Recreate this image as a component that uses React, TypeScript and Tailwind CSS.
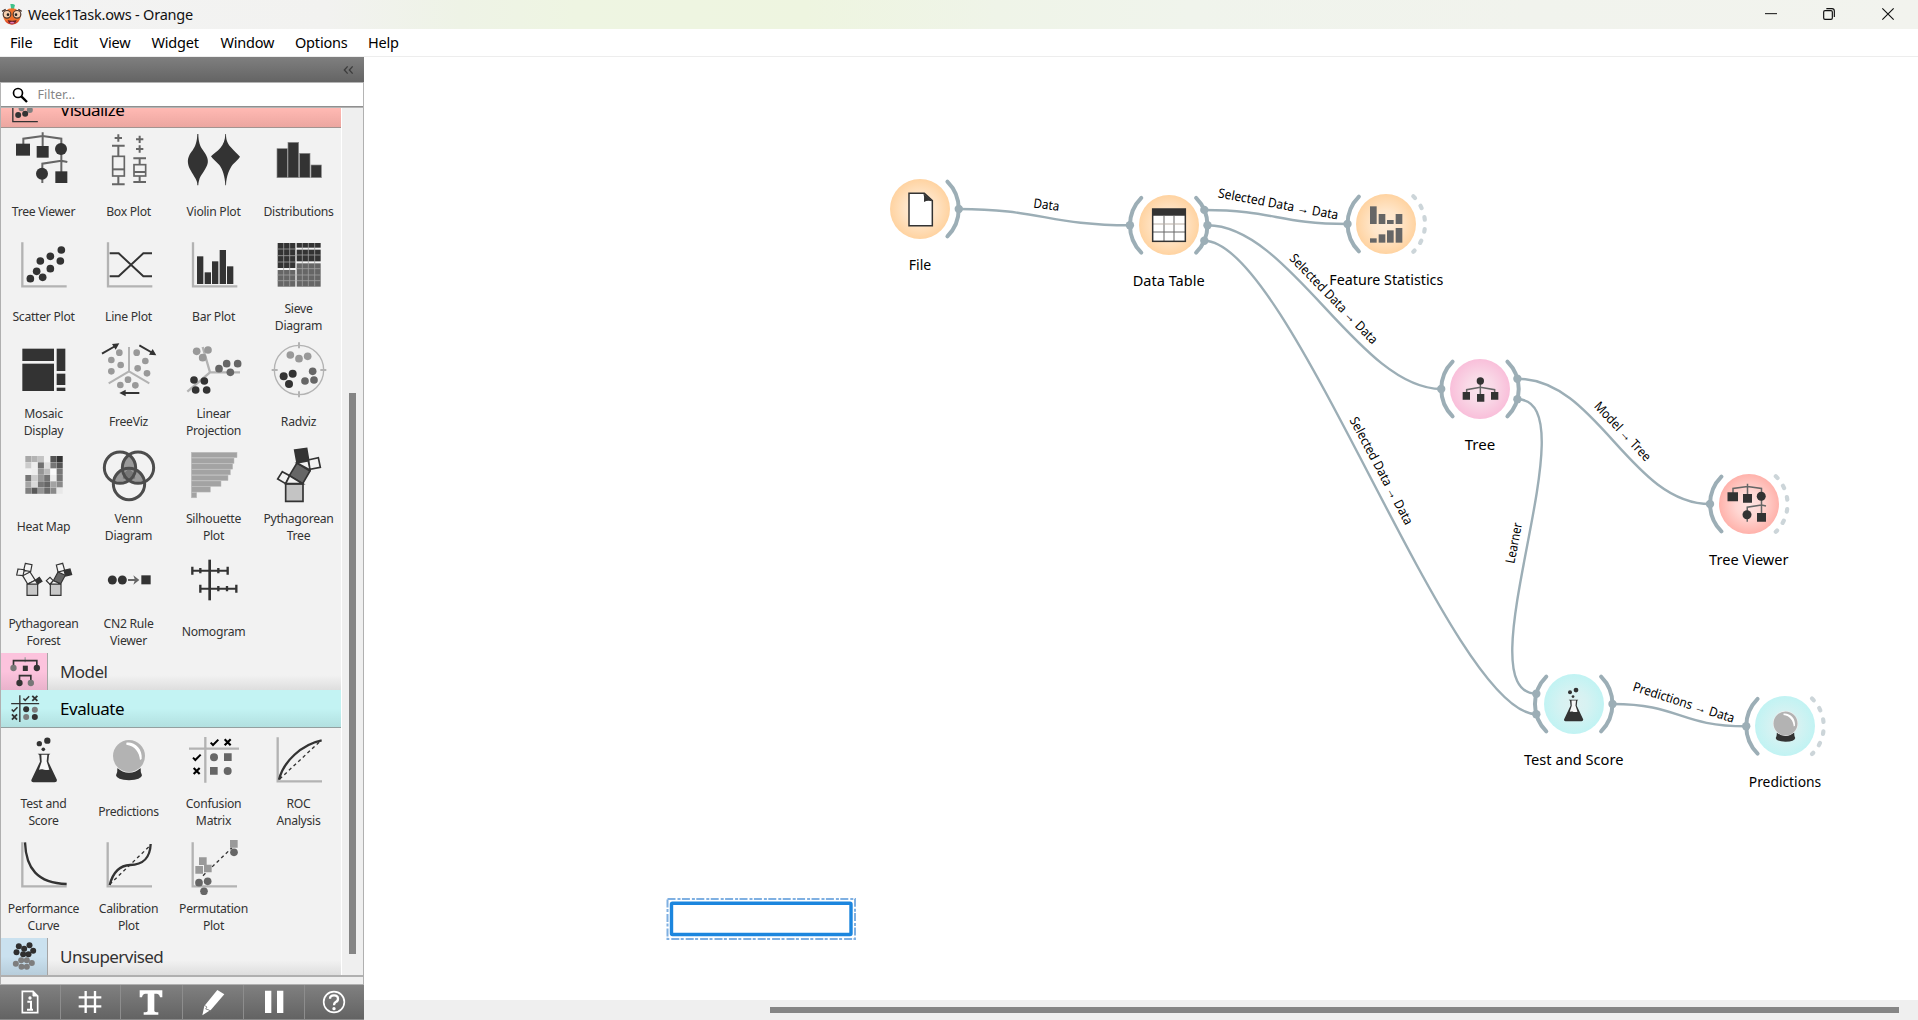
import React from "react";

const DARK = "#333333";
const MID = "#666666";
const SOFT = "#999999";
const AXIS = "#b3b3b3";
const LINK = "#9caeb6";

type Dot = [number, number];

function Dots({ points, r, fill }: { points: Dot[]; r: number; fill: string }) {
  return (
    <g fill={fill}>
      {points.map(([x, y]) => (
        <circle key={`${x}-${y}`} cx={x} cy={y} r={r} />
      ))}
    </g>
  );
}

function Axes({ x, y }: { x: number; y: number }) {
  return <path d={`M${x} ${y}v132h133`} fill="none" stroke={AXIS} strokeWidth="7" />;
}

function Check({ x, y, s = 1, color = "#000" }: { x: number; y: number; s?: number; color?: string }) {
  return (
    <path
      transform={`translate(${x} ${y}) scale(${s})`}
      d="M-11 1L-4 8L12 -8"
      fill="none"
      stroke={color}
      strokeWidth="6"
    />
  );
}

function Cross({ x, y, s = 1, color = "#000" }: { x: number; y: number; s?: number; color?: string }) {
  return (
    <path
      transform={`translate(${x} ${y}) scale(${s})`}
      d="M-9 -9L9 9M9 -9L-9 9"
      fill="none"
      stroke={color}
      strokeWidth="6.5"
    />
  );
}

const HEAT = [
  ["#a8a8a8", "#b3b3b3", "#c3c3c3", "#f2f2f2", "#555555", "#333333"],
  ["#cccccc", "#ededed", "#707070", "#dddddd", "#777777", "#555555"],
  ["#f2f2f2", "#ededed", "#959595", "#bbbbbb", "#fafafa", "#777777"],
  ["#777777", "#cccccc", "#999999", "#747474", "#ededed", "#777777"],
  ["#a5a5a5", "#d9d9d9", "#777777", "#666666", "#a3a3a3", "#8a8a8a"],
  ["#808080", "#595959", "#959595", "#6b6b6b", "#8a8a8a", "#e8e8e8"],
];

const SILHOUETTE = [137, 128, 124, 117, 110, 89, 57, 16];

type IconDef = { box: string; art: React.ReactNode };

const ICONS: Record<string, IconDef> = {
  treeViewer: {
    box: "42 390 180 180",
    art: (
      <>
        <path
          d="M70 436V416L128 408L184 416V440M128 397V440M184 460V520M127 510V491L184 482M184 482L202 486M127 530V549"
          fill="none"
          stroke={MID}
          strokeWidth="6"
        />
        <g fill={DARK}>
          <rect x="48" y="431" width="42" height="36" />
          <rect x="110" y="438" width="36" height="35" />
          <circle cx="183" cy="447" r="18" />
          <circle cx="126" cy="521" r="18" />
          <rect x="166" y="514" width="36" height="35" />
        </g>
      </>
    ),
  },
  boxPlot: {
    box: "297 390 180 180",
    art: (
      <g fill="none" stroke={MID} strokeWidth="5">
        <path d="M355 403v22M344 414h22" strokeWidth="6" />
        <path d="M419 407v22M408 418h22M419 436v22M408 447h22" strokeWidth="6" />
        <path d="M336 437h38M355 437v31M355 529v23M336 553h38" strokeWidth="6" />
        <rect x="338" y="469" width="35" height="59" />
        <path d="M338 508h35" strokeWidth="6" />
        <path d="M400 475h38M419 475v18M419 528v18M400 546h38" strokeWidth="6" />
        <rect x="402" y="494" width="35" height="34" />
        <path d="M402 516h35" strokeWidth="6" />
      </g>
    ),
  },
  violinPlot: {
    box: "552 390 180 180",
    art: (
      <g fill={DARK}>
        <path d="M592 402H595C595 425 600 440 610 452C622 468 625 480 623 490C620 505 605 522 599 535C596 545 595 550 595 556H592C592 548 590 542 586 535C578 520 566 506 564 490C562 474 568 464 578 451C587 437 591 425 592 402Z" />
        <path d="M676 402H678C678 420 682 430 692 441C702 453 712 461 720 470C716 477 708 483 699 493C688 507 679 528 678 556H676C675 530 668 508 658 495C648 484 638 477 633 469C640 461 652 455 661 444C671 432 675 420 676 402Z" />
      </g>
    ),
  },
  distributions: {
    box: "807 390 180 180",
    art: (
      <g fill={DARK} stroke="#8a8a8a" strokeWidth="2">
        <rect x="831" y="446" width="31" height="87" />
        <rect x="864" y="427" width="32" height="106" />
        <rect x="899" y="460" width="31" height="73" />
        <rect x="933" y="495" width="31" height="38" />
      </g>
    ),
  },
  scatterPlot: {
    box: "42 30 180 180",
    art: (
      <>
        <Axes x={67} y={52} />
        <Dots
          r={11.5}
          fill={DARK}
          points={[[184, 75], [151, 94], [121, 108], [181, 108], [151, 131], [110, 139], [91, 161], [128, 157]]}
        />
      </>
    ),
  },
  linePlot: {
    box: "297 30 180 180",
    art: (
      <>
        <Axes x={324} y={52} />
        <path d="M329 85H356L430 154H456M329 154H356L430 85H456" fill="none" stroke={DARK} strokeWidth="6" />
      </>
    ),
  },
  barPlot: {
    box: "552 30 180 180",
    art: (
      <>
        <Axes x={579} y={52} />
        <g fill={DARK}>
          <rect x="591" y="94" width="19" height="83" />
          <rect x="614" y="142" width="19" height="35" />
          <rect x="636" y="109" width="19" height="68" />
          <rect x="659" y="75" width="19" height="102" />
          <rect x="681" y="124" width="19" height="53" />
        </g>
      </>
    ),
  },
  sieve: {
    box: "807 30 180 180",
    art: (
      <>
        <rect x="833" y="54" width="53" height="75" fill={DARK} />
        <rect x="890" y="54" width="72" height="14" fill={DARK} />
        <rect x="890" y="74" width="72" height="35" fill={DARK} />
        <rect x="833" y="135" width="53" height="50" fill={MID} />
        <rect x="890" y="115" width="72" height="70" fill={MID} />
        <path
          d="M851 54v131M869 54v131M907 54v131M925 54v131M944 54v131M833 72h53M833 92h53M833 111h53M833 150h53M833 167h53M890 90h72M890 131h72M890 150h72M890 167h72"
          fill="none"
          stroke="#a0a0a0"
          strokeWidth="2.4"
        />
      </>
    ),
  },
  mosaic: {
    box: "42 345 180 180",
    art: (
      <g fill={DARK}>
        <rect x="67" y="371" width="95" height="37" />
        <rect x="67" y="416" width="95" height="82" />
        <rect x="170" y="371" width="26" height="67" />
        <rect x="170" y="446" width="26" height="34" />
        <rect x="170" y="488" width="26" height="10" />
      </g>
    ),
  },
  freeViz: {
    box: "297 345 180 180",
    art: (
      <>
        <path d="M387 366V439L326 475M387 439L448 475" fill="none" stroke={AXIS} strokeWidth="6" />
        <Dots
          r={10}
          fill={SOFT}
          points={[[358, 383], [410, 383], [334, 405], [436, 408], [362, 420], [413, 430], [334, 439], [441, 445], [384, 464], [361, 480], [406, 481]]}
        />
        <g fill={DARK} stroke={DARK}>
          <path d="M306 386L346 363M418 361L458 384M418 504H372" strokeWidth="6" />
          <path d="M358 355L336 357L347 374ZM469 391L447 389L458 372ZM358 504L377 494V514Z" stroke="none" />
        </g>
      </>
    ),
  },
  linearProjection: {
    box: "552 345 180 180",
    art: (
      <>
        <path d="M608 366L630 442H720M630 442L562 500" fill="none" stroke={AXIS} strokeWidth="7" />
        <Dots r={11.5} fill={SOFT} points={[[590, 379], [624, 375], [608, 398]]} />
        <Dots r={11.5} fill={MID} points={[[657, 431], [680, 416], [713, 416], [691, 442]]} />
        <Dots r={11.5} fill={DARK} points={[[582, 465], [613, 468], [587, 495], [620, 495]]} />
      </>
    ),
  },
  radviz: {
    box: "807 345 180 180",
    art: (
      <>
        <circle cx="897" cy="435" r="74" fill="none" stroke={AXIS} strokeWidth="4" />
        <path d="M897 352v18M897 499v18M815 435h18M961 435h18" stroke={AXIS} strokeWidth="6" />
        <Dots r={11.5} fill={SOFT} points={[[871, 390], [897, 401], [923, 394]]} />
        <Dots r={11.5} fill={MID} points={[[938, 439], [915, 468], [942, 465]]} />
        <Dots r={12} fill={DARK} points={[[878, 446], [851, 454], [867, 477]]} />
      </>
    ),
  },
  heatMap: {
    box: "42 30 180 180",
    art: (
      <>
        {HEAT.map((row, j) =>
          row.map((c, i) => (
            <rect key={`${i}-${j}`} x={76 + i * 18.8} y={63 + j * 19} width="18.2" height="18.4" fill={c} />
          )),
        )}
      </>
    ),
  },
  venn: {
    box: "297 30 180 180",
    art: (
      <>
        <clipPath id="vennLeft">
          <circle cx="360" cy="98" r="46" />
        </clipPath>
        <clipPath id="vennRight">
          <circle cx="414" cy="98" r="46" />
        </clipPath>
        <circle cx="414" cy="98" r="46" fill="#999" clipPath="url(#vennLeft)" />
        <circle cx="387" cy="147" r="46" fill="#999" clipPath="url(#vennLeft)" />
        <circle cx="387" cy="147" r="46" fill="#999" clipPath="url(#vennRight)" />
        <path d="M387 101C398 108 404 117 406 130C394 136 380 136 368 130C370 117 376 108 387 101Z" fill="#777" />
        <g fill="none" stroke="#4d4d4d" strokeWidth="9">
          <circle cx="360" cy="98" r="47" />
          <circle cx="414" cy="98" r="47" />
          <circle cx="387" cy="147" r="47" />
        </g>
      </>
    ),
  },
  silhouette: {
    box: "552 30 180 180",
    art: (
      <g fill="#a3a3a3">
        {SILHOUETTE.map((w, i) => (
          <rect key={i} x="574" y={52 + i * 17.2} width={w} height="16" stroke="#bcbcbc" strokeWidth="1.5" />
        ))}
      </g>
    ),
  },
  pythTree: {
    box: "807 30 180 180",
    art: (
      <g stroke={DARK} strokeWidth="5">
        <path d="M857 147H909V199H857Z" fill="#c4c4c4" />
        <path d="M891 84L930 108L908 146L868 122Z" fill={MID} />
        <path d="M884 45L920 40L926 76L891 83Z" fill={DARK} />
        <path d="M924 75L955 68L961 97L930 103ZM847 110L869 122L857 146L833 132ZM891 84L926 77L930 105Z" fill="#f2f2f2" />
        <path d="M869 122L857 146L908 146Z" fill="#f2f2f2" />
      </g>
    ),
  },
  pythForest: {
    box: "42 345 180 180",
    art: (
      <g stroke={DARK} strokeWidth="3.5" fill="#f4f4f4">
        <path d="M81 447H113V481H81ZM151 447H183V481H151Z" fill="#c8c8c8" />
        <path d="M68 422L90 411L106 436L83 447Z" />
        <path d="M54 402L73 404L69 422L50 420ZM76 385L96 389L92 410L71 406Z" />
        <path d="M106 436L118 427L126 439L113 447Z" fill={DARK} />
        <path d="M174 411L196 421L182 446L160 437Z" fill={MID} />
        <path d="M169 390L188 385L194 406L174 411ZM139 437L150 427L160 437L150 448Z" />
        <path d="M192 406L210 402L215 419L197 423Z" fill={DARK} />
        <path d="M83 447L106 436L113 447ZM151 447L160 437L183 447Z" />
      </g>
    ),
  },
  cn2: {
    box: "297 345 180 180",
    art: (
      <>
        <Dots r={13.5} fill={DARK} points={[[337, 435], [367, 435]]} />
        <path d="M384 435H408" stroke={MID} strokeWidth="6" />
        <path d="M400 421L418 435L400 449L405 435Z" fill={MID} />
        <rect x="424" y="421" width="28" height="27" fill={DARK} />
      </>
    ),
  },
  nomogram: {
    box: "552 345 180 180",
    art: (
      <g stroke={DARK} fill="none">
        <path d="M629 374V496" strokeWidth="8" />
        <path d="M576 407H683M601 461H709" strokeWidth="6" />
        <path
          d="M577 395v24M601 399v16M655 399v16M683 395v24M601 449v24M655 453v16M681 453v16M709 449v24"
          strokeWidth="7"
        />
      </g>
    ),
  },
  flask: {
    box: "42 255 180 180",
    art: (
      <>
        <Dots r={9.5} fill={DARK} points={[[142, 287]]} />
        <Dots r={8} fill={DARK} points={[[118, 296]]} />
        <Dots r={5.5} fill={DARK} points={[[130, 313]]} />
        <path d="M113 326H151L147 330L145 350L171 405Q171 412 164 412H100Q93 412 94 405L120 350L118 330Z" fill={DARK} />
        <path d="M124 329H142L140 349L148 374Q134 377 128 373Q121 372 117 374L125 350Z" fill="#f6f6f6" />
      </>
    ),
  },
  ball: {
    box: "297 255 180 180",
    art: (
      <>
        <path d="M352 370H422Q421 384 426 391Q424 405 387 406Q350 405 348 391Q353 384 352 370Z" fill={DARK} />
        <circle cx="387" cy="333" r="50" fill="#f2f2f2" />
        <circle cx="387" cy="333" r="48" fill="#b3b3b3" />
        <path d="M379 293C405 290 428 312 425 342L420 345C418 322 405 302 379 299Z" fill="#fff" />
      </>
    ),
  },
  confusion: {
    box: "552 255 180 180",
    art: (
      <>
        <path d="M616 276V413M567 311H717" stroke={AXIS} strokeWidth="7" />
        <Check x={643} y={292} />
        <Cross x={683} y={292} />
        <Check x={590} y={337} />
        <Cross x={590} y={378} />
        <Dots r={12} fill={MID} points={[[642, 337], [683, 378]]} />
        <path d="M672 325h23v23h-23ZM630 366h23v23h-23Z" fill={MID} />
      </>
    ),
  },
  roc: {
    box: "807 255 180 180",
    art: (
      <>
        <Axes x={833} y={277} />
        <path d="M839 402L958 291" stroke={DARK} strokeWidth="4" strokeDasharray="10 9" />
        <path d="M837 404C850 350 905 298 965 286" fill="none" stroke={DARK} strokeWidth="7" />
      </>
    ),
  },
  perfCurve: {
    box: "42 30 180 180",
    art: (
      <>
        <Axes x={67} y={52} />
        <path d="M75 52C78 130 112 175 200 177" fill="none" stroke={DARK} strokeWidth="7" />
      </>
    ),
  },
  calibration: {
    box: "297 30 180 180",
    art: (
      <>
        <Axes x={323} y={52} />
        <path d="M329 178L446 66" stroke={DARK} strokeWidth="4" strokeDasharray="10 9" />
        <path d="M329 180C340 138 360 121 390 120C430 119 450 100 452 57" fill="none" stroke={DARK} strokeWidth="7" />
      </>
    ),
  },
  permutation: {
    box: "552 30 180 180",
    art: (
      <>
        <Axes x={578} y={52} />
        <path d="M609 152L696 68" stroke={DARK} strokeWidth="4" strokeDasharray="10 9" />
        <path d="M690 45h23v23h-23ZM597 97h23v23h-23ZM586 123h23v23h-23ZM612 119h23v23h-23Z" fill={SOFT} />
        <Dots r={11.5} fill={MID} points={[[702, 82], [623, 169], [597, 173], [612, 199]]} />
      </>
    ),
  },
  featureStats: {
    box: "499 132 120 120",
    art: (
      <g fill={MID}>
        <rect x="511" y="139" width="20" height="53" />
        <rect x="537" y="162" width="20" height="30" />
        <rect x="562" y="180" width="20" height="12" />
        <rect x="588" y="162" width="20" height="30" />
        <rect x="511" y="235" width="20" height="13" />
        <rect x="537" y="223" width="20" height="25" />
        <rect x="562" y="211" width="20" height="37" />
        <rect x="588" y="204" width="20" height="44" />
      </g>
    ),
  },
  table: {
    box: "836 136 120 120",
    art: (
      <>
        <rect x="847" y="148" width="98" height="96" fill="#fff" />
        <path d="M847 148h98v20h-98Z" fill={DARK} />
        <path d="M881 168v76M911 168v76M847 217h98" stroke={MID} strokeWidth="3" fill="none" />
        <path d="M847 193h98" stroke="#b9afa6" strokeWidth="3" />
        <rect x="847" y="148" width="98" height="97" fill="none" stroke={DARK} strokeWidth="4.5" />
      </>
    ),
  },
  file: {
    box: "90 87 120 120",
    art: (
      <>
        <path d="M117 100H163L187 122V197H117Z" fill="#fff" stroke={DARK} strokeWidth="4.5" />
        <path d="M160 100L187 124Q172 120 162 126Q164 112 160 100Z" fill={DARK} />
      </>
    ),
  },
  tree: {
    box: "390 87 120 120",
    art: (
      <>
        <path d="M451 122V165M410 160V149L451 142L494 149V160" fill="none" stroke={MID} strokeWidth="4.5" />
        <circle cx="451" cy="123" r="11" fill={DARK} />
        <path d="M398 156h22v23h-22ZM441 162h22v23h-22ZM483 156h22v23h-22Z" fill={DARK} />
      </>
    ),
  },
};

function Icon({ name, className }: { name: string; className: string }) {
  const icon = ICONS[name];
  return (
    <svg viewBox={icon.box} className={className}>
      {icon.art}
    </svg>
  );
}

type Widget = { icon: string; lines: string[] };

const VISUALIZE: Widget[] = [
  { icon: "treeViewer", lines: ["Tree Viewer"] },
  { icon: "boxPlot", lines: ["Box Plot"] },
  { icon: "violinPlot", lines: ["Violin Plot"] },
  { icon: "distributions", lines: ["Distributions"] },
  { icon: "scatterPlot", lines: ["Scatter Plot"] },
  { icon: "linePlot", lines: ["Line Plot"] },
  { icon: "barPlot", lines: ["Bar Plot"] },
  { icon: "sieve", lines: ["Sieve", "Diagram"] },
  { icon: "mosaic", lines: ["Mosaic", "Display"] },
  { icon: "freeViz", lines: ["FreeViz"] },
  { icon: "linearProjection", lines: ["Linear", "Projection"] },
  { icon: "radviz", lines: ["Radviz"] },
  { icon: "heatMap", lines: ["Heat Map"] },
  { icon: "venn", lines: ["Venn", "Diagram"] },
  { icon: "silhouette", lines: ["Silhouette", "Plot"] },
  { icon: "pythTree", lines: ["Pythagorean", "Tree"] },
  { icon: "pythForest", lines: ["Pythagorean", "Forest"] },
  { icon: "cn2", lines: ["CN2 Rule", "Viewer"] },
  { icon: "nomogram", lines: ["Nomogram"] },
];

const EVALUATE: Widget[] = [
  { icon: "flask", lines: ["Test and", "Score"] },
  { icon: "ball", lines: ["Predictions"] },
  { icon: "confusion", lines: ["Confusion", "Matrix"] },
  { icon: "roc", lines: ["ROC", "Analysis"] },
  { icon: "perfCurve", lines: ["Performance", "Curve"] },
  { icon: "calibration", lines: ["Calibration", "Plot"] },
  { icon: "permutation", lines: ["Permutation", "Plot"] },
];

function WidgetGrid({ items }: { items: Widget[] }) {
  return (
    <div className="grid grid-cols-[repeat(4,85px)]">
      {items.map((w) => (
        <div key={w.lines.join(" ")} className="flex h-[105px] flex-col items-center pt-0.5">
          <Icon name={w.icon} className="size-[60px] shrink-0" />
          <div className="flex h-11 flex-col items-center justify-center text-[12.2px] leading-[17px] tracking-[-0.28px] whitespace-nowrap text-[#333]">
            {w.lines.map((l) => (
              <span key={l}>{l}</span>
            ))}
          </div>
        </div>
      ))}
    </div>
  );
}

function VisualizeIcon() {
  return (
    <svg viewBox="3 270 140 111" className="h-[37px] w-[47px]">
      <path d="M38 290V365H113" fill="none" stroke={DARK} strokeWidth="4" />
      <Dots r={9} fill="#808080" points={[[64, 325], [89, 330], [80, 300]]} />
      <Dots r={9} fill={DARK} points={[[54, 345], [75, 341], [100, 310]]} />
    </svg>
  );
}

function ModelIcon() {
  return (
    <svg viewBox="3 24 140 111" className="h-[37px] w-[47px]">
      <path d="M75 37v15" stroke="#a0a0a0" strokeWidth="4" />
      <path d="M40 60V47H110V60M58 106V92H92V106" fill="none" stroke={DARK} strokeWidth="5" />
      <rect x="68" y="62" width="15" height="16" fill={DARK} />
      <Dots r={9.5} fill={DARK} points={[[110, 69], [58, 114]]} />
      <Dots r={9.5} fill="#777" points={[[40, 69], [92, 114]]} />
    </svg>
  );
}

function EvaluateIcon() {
  return (
    <svg viewBox="3 135 140 111" className="h-[37px] w-[47px]">
      <path d="M59 151V231M33 176H117" stroke={DARK} strokeWidth="4" />
      <Check x={78} y={160} s={0.75} color={DARK} />
      <Cross x={104} y={160} s={0.85} color={DARK} />
      <Check x={43} y={193} s={0.75} color={DARK} />
      <Cross x={43} y={216} s={0.85} color={DARK} />
      <Dots r={9} fill={DARK} points={[[78, 193], [104, 216]]} />
      <Dots r={9} fill="#7d7d7d" points={[[104, 194], [78, 216]]} />
    </svg>
  );
}

function UnsupervisedIcon() {
  return (
    <svg viewBox="3 339 140 111" className="h-[37px] w-[47px]">
      <Dots r={9} fill="#7d7d7d" points={[[63, 406], [80, 406], [47, 416], [95, 414], [64, 425], [80, 425]]} />
      <Dots r={9} fill="#2f2f2f" points={[[56, 364], [88, 361], [72, 371], [49, 382], [99, 377], [69, 388], [85, 388]]} />
    </svg>
  );
}

function OrangeLogo() {
  return (
    <svg viewBox="0 0 66 66" className="size-[22px] shrink-0">
      <path d="M28 0Q35 -2 42 3L38 18H31Z" fill="#3fc28b" />
      <ellipse cx="33" cy="37" rx="26" ry="24" fill="#f0702a" />
      <path d="M11 48Q33 66 55 48Q47 62 33 62Q19 62 11 48Z" fill="#d9402c" />
      <circle cx="18" cy="31" r="11.5" fill="#f6cfae" stroke="#4a352c" strokeWidth="3.5" />
      <circle cx="48" cy="31" r="11.5" fill="#f6cfae" stroke="#4a352c" strokeWidth="3.5" />
      <circle cx="21" cy="32" r="4" fill="#222" />
      <circle cx="45" cy="32" r="4" fill="#222" />
      <path d="M3 22L14 16M62 22L52 16" stroke="#4a352c" strokeWidth="4" />
      <path d="M20 48Q33 52 47 48Q44 60 33 60Q23 60 20 48Z" fill="#6a2027" />
      <path d="M26 56Q33 51 41 56Q33 61 26 56Z" fill="#e879b0" />
    </svg>
  );
}

function TitleBar() {
  return (
    <header className="flex h-[29px] shrink-0 items-center bg-[linear-gradient(90deg,#f3f3f3_0%,#f2f2f0_17%,#eef3e6_24%,#eef5e2_30%,#eef5e0_42%,#eff4e8_52%,#f0f4ec_62%,#f1f3ed_80%,#f2f3ee_100%)] pl-[1px]">
      <OrangeLogo />
      <h1 className="ml-[5px] text-[14.5px] tracking-[-0.2px] text-[#111]">Week1Task.ows - Orange</h1>
      <div className="ml-auto flex items-center">
        <svg viewBox="0 0 654 87" className="h-[29px] w-[218px]" fill="none" stroke="#111">
          <path d="M195 41H231" strokeWidth="3" />
          <rect x="371" y="32" width="26" height="26" rx="4" strokeWidth="3.5" />
          <path d="M379 26H396Q403 26 403 33V51" strokeWidth="3.5" />
          <path d="M547 25L581 59M581 25L547 59" strokeWidth="3.5" />
        </svg>
      </div>
    </header>
  );
}

function MenuBar() {
  return (
    <nav className="flex h-7 shrink-0 items-center border-b border-[#ededed] bg-white pl-[10px] text-[14.5px] tracking-[-0.2px] text-black">
      <span className="w-[43px]">File</span>
      <span className="w-[46.5px]">Edit</span>
      <span className="w-[52px]">View</span>
      <span className="w-[69px]">Widget</span>
      <span className="w-[74.5px]">Window</span>
      <span className="w-[73px]">Options</span>
      <span>Help</span>
    </nav>
  );
}

function Section({ icon, title, tab }: { icon: React.ReactNode; title: string; tab: string }) {
  return (
    <div className="flex h-[37px] items-center bg-[linear-gradient(#f2f2f2_60%,#dedede)]">
      <div className={`h-[37px] w-[47px] border-r border-[#a5a5a5] ${tab}`}>{icon}</div>
      <span className="ml-3 text-[17px] tracking-[-0.55px] text-[#333]">{title}</span>
    </div>
  );
}

function Toolbar() {
  const cell = "flex h-full items-center justify-center border-r border-[#8d8d8d] pr-px";
  return (
    <div className="grid h-[34px] shrink-0 grid-cols-[61px_60px_62px_61px_61px_59px] bg-[linear-gradient(#808080,#636363)]">
      <div className={cell}>
        <svg viewBox="60 486 60 90" className="h-[30px] w-5">
          <path d="M67 499H99L113 513V563H67Z" fill="none" stroke="#fff" strokeWidth="5" />
          <path d="M99 499V513H113" fill="#fff" stroke="#fff" strokeWidth="3" />
          <circle cx="90" cy="519" r="5" fill="#fff" />
          <path d="M82 530H93V552M81 554H99" fill="none" stroke="#fff" strokeWidth="6" />
        </svg>
      </div>
      <div className={cell}>
        <svg viewBox="225 486 90 90" className="size-[30px]">
          <path d="M257 498V564M285 498V564M236 517H304M236 544H304" stroke="#fff" strokeWidth="7" />
        </svg>
      </div>
      <div className={cell}>
        <svg viewBox="408 486 90 90" className="size-[30px]">
          <path d="M419 496H487V517H480Q478 506 470 506H463V557Q463 562 475 562V569H431V562Q443 562 443 557V506H436Q428 506 426 517H419Z" fill="#fff" />
        </svg>
      </div>
      <div className={cell}>
        <svg viewBox="593 486 90 90" className="size-[30px]">
          <path d="M651 495L672 508L632 554L606 571L612 543Z" fill="#fff" />
          <path d="M612 541L620 546L616 552L626 555L631 559" fill="none" stroke="#777" strokeWidth="2.5" />
        </svg>
      </div>
      <div className={cell}>
        <svg viewBox="777 486 90 90" className="size-[30px]">
          <path d="M795 497h19v67h-19ZM831 497h19v67h-19Z" fill="#fff" />
        </svg>
      </div>
      <div className="flex h-full items-center justify-center pr-0.5">
        <svg viewBox="957 486 90 90" className="size-[30px]">
          <circle cx="1002" cy="531" r="31" fill="none" stroke="#fff" strokeWidth="5" />
          <path d="M990 521Q990 511 1002 511Q1014 511 1014 521Q1014 528 1007 531Q1002 534 1002 541" fill="none" stroke="#fff" strokeWidth="7" />
          <circle cx="1002" cy="551" r="5" fill="#fff" />
        </svg>
      </div>
    </div>
  );
}

function Sidebar() {
  return (
    <aside className="flex w-[364px] shrink-0 flex-col bg-[#f2f2f2]">
      <div className="flex h-[25px] shrink-0 items-center justify-end bg-[linear-gradient(#7f7f7f,#646464)] pr-[10px]">
        <svg viewBox="1030 192 33 30" className="h-[10px] w-[11px]" fill="none" stroke="#3c3c3c" strokeWidth="4">
          <path d="M1044 196L1034 207L1044 218M1059 196L1049 207L1059 218" />
        </svg>
      </div>
      <div className="flex h-[26px] shrink-0 items-center border border-[#b4b4b4] bg-white shadow-[inset_0_-1px_0_#8f8f8f]">
        <svg viewBox="36 258 48 48" className="ml-[11px] size-4" fill="none" stroke="#000">
          <circle cx="54" cy="276" r="13.5" strokeWidth="5" />
          <path d="M64 286L81 303" strokeWidth="7" />
        </svg>
        <span className="ml-[9.5px] pt-px text-[12.5px] text-[#868686]">Filter...</span>
      </div>
      <div className="flex h-[867px] shrink-0 overflow-hidden border-x border-[#b0b0b0]">
        <div className="w-[340px] shrink-0 overflow-hidden">
          <div className="-mt-[18px] flex h-[38px] items-center border-b border-[#a39390] bg-[linear-gradient(#ffb9b3_50%,#eca6a0)]">
            <VisualizeIcon />
            <span className="ml-3 pt-0.5 text-[17px] tracking-[-0.55px] text-black">Visualize</span>
          </div>
          <WidgetGrid items={VISUALIZE} />
          <Section icon={<ModelIcon />} title="Model" tab="bg-[linear-gradient(#fcc3dd_50%,#e9b2cb)]" />
          <div className="flex h-[38px] items-center border-b border-[#93a0a0] bg-[linear-gradient(#c3f3f3_50%,#b2e0e0)]">
            <EvaluateIcon />
            <span className="ml-3 pt-px text-[17px] tracking-[-0.45px] text-black">Evaluate</span>
          </div>
          <WidgetGrid items={EVALUATE} />
          <Section icon={<UnsupervisedIcon />} title="Unsupervised" tab="bg-[linear-gradient(#cae1ef_50%,#b7cddb)]" />
        </div>
        <div className="flex flex-1 items-start border-l border-white bg-[#efefef] pt-[285px] pl-[7px]">
          <div className="h-[561px] w-[7px] bg-[#858585]" />
        </div>
      </div>
      <div className="h-[10px] shrink-0 border border-t-2 border-[#b0b0b0] bg-[#efefef]" />
      <Toolbar />
      <div className="flex-1 bg-[#8a8a8a]" />
    </aside>
  );
}

type Node = {
  id: string;
  x: number;
  y: number;
  icon: string;
  iconClass: string;
  fill: string;
  label: string;
  width: number;
  left?: boolean;
  right?: "solid" | "dashed";
  inputs: number[];
  outputs: number[];
};

const ORANGE = "bg-[radial-gradient(circle_closest-side,#ffecd8_0%,#ffe6ca_45%,#ffd3a1_100%)]";
const PINK = "bg-[radial-gradient(circle_closest-side,#f9e3ec_0%,#f9d9e7_45%,#f9bfda_100%)]";
const RED = "bg-[radial-gradient(circle_closest-side,#ffe4e2_0%,#ffd6d2_45%,#ffb2ab_100%)]";
const CYAN = "bg-[radial-gradient(circle_closest-side,#dff1f1_0%,#d6f2f2_45%,#c1f3f3_100%)]";

const NODES: Node[] = [
  { id: "file", x: 920, y: 209, icon: "file", iconClass: "size-10", fill: ORANGE, label: "File", width: 22.5, right: "solid", inputs: [], outputs: [0] },
  { id: "table", x: 1168.7, y: 225.3, icon: "table", iconClass: "size-10", fill: ORANGE, label: "Data Table", width: 72, left: true, right: "solid", inputs: [0], outputs: [-15.4, 0, 15.4] },
  { id: "stats", x: 1386.3, y: 224, icon: "featureStats", iconClass: "size-10", fill: ORANGE, label: "Feature Statistics", width: 114, left: true, right: "dashed", inputs: [0], outputs: [] },
  { id: "tree", x: 1480, y: 389, icon: "tree", iconClass: "size-10", fill: PINK, label: "Tree", width: 30.5, left: true, right: "solid", inputs: [0], outputs: [-10.3, 10.3] },
  { id: "viewer", x: 1748.8, y: 504, icon: "treeViewer", iconClass: "size-[45px]", fill: RED, label: "Tree Viewer", width: 79.5, left: true, right: "dashed", inputs: [0], outputs: [] },
  { id: "test", x: 1573.7, y: 704, icon: "flask", iconClass: "size-[45px]", fill: CYAN, label: "Test and Score", width: 99.5, left: true, right: "solid", inputs: [-10.3, 10.3], outputs: [0] },
  { id: "pred", x: 1785, y: 726.3, icon: "ball", iconClass: "size-[45px]", fill: CYAN, label: "Predictions", width: 72.5, left: true, right: "dashed", inputs: [0], outputs: [] },
];

const LINKS: [number, number, number, number, number][] = [
  [958.7, 209, 1130, 225.3, 80],
  [1204.3, 210, 1347.6, 224, 70],
  [1207.5, 225.3, 1441.3, 389, 82],
  [1204.3, 240.7, 1536.7, 714.3, 86],
  [1517.3, 378.7, 1710.3, 504, 80],
  [1517.3, 399.3, 1536.7, 693.7, 76],
  [1612.7, 704, 1746.3, 726.3, 67],
];

const LINK_LABELS: [string, number, number, number, number][] = [
  ["Data", 1033, 207.5, 7.5, 26],
  ["Selected Data → Data", 1217.5, 197.3, 10.5, 122],
  ["Selected Data → Data", 1288.7, 259, 45.8, 120],
  ["Selected Data → Data", 1349.3, 420, 62, 120],
  ["Model → Tree", 1593.5, 406.7, 46.8, 76],
  ["Learner", 1514.3, 564, -79, 41],
  ["Predictions → Data", 1632, 690.5, 17.8, 106],
];

const RADIUS = 38.8;

function anchorX(dy: number) {
  return Math.sqrt(RADIUS * RADIUS - dy * dy);
}

function LinkText({ text }: { text: string }) {
  const [from, to] = text.split("→");
  if (to === undefined) return <>{text}</>;
  return (
    <>
      {from}
      <tspan fontFamily="'Liberation Sans', sans-serif">→</tspan>
      {to}
    </>
  );
}

function Canvas() {
  return (
    <div className="relative min-h-0 flex-1 overflow-hidden bg-white">
      <svg viewBox="364 57 1554 943" className="absolute inset-0 h-[943px] w-[1554px]">
        <g fill="none" stroke={LINK} strokeWidth="2.4">
          {LINKS.map(([x1, y1, x2, y2, c], i) => (
            <path key={i} d={`M${x1} ${y1}C${x1 + c} ${y1} ${x2 - c} ${y2} ${x2} ${y2}`} />
          ))}
        </g>
        {NODES.map((n) => (
          <g key={n.id} transform={`translate(${n.x} ${n.y})`}>
            {n.left && (
              <path d="M-27.4 -27.4A38.8 38.8 0 0 0 -27.4 27.4" fill="none" stroke={LINK} strokeWidth="4" strokeLinecap="round" />
            )}
            {n.right === "solid" && (
              <path d="M27.4 -27.4A38.8 38.8 0 0 1 27.4 27.4" fill="none" stroke={LINK} strokeWidth="4" strokeLinecap="round" />
            )}
            {n.right === "dashed" && (
              <path
                d="M27 -27.8A38.8 38.8 0 0 1 27 27.8"
                fill="none"
                stroke="#ccd5d9"
                strokeWidth="4.2"
                strokeLinecap="round"
                strokeDasharray="2.6 9.4"
              />
            )}
            {n.inputs.map((dy) => (
              <circle key={dy} cx={-anchorX(dy)} cy={dy} r="4.2" fill={LINK} />
            ))}
            {n.outputs.map((dy) => (
              <circle key={dy} cx={anchorX(dy)} cy={dy} r="4.2" fill={LINK} />
            ))}
          </g>
        ))}
        <g fill="#000" fontSize="13" fontFamily="'Noto Sans', sans-serif">
          {LINK_LABELS.map(([text, x, y, a, len], i) => (
            <text key={i} transform={`translate(${x} ${y}) rotate(${a})`} textLength={len} lengthAdjust="spacingAndGlyphs">
              <LinkText text={text} />
            </text>
          ))}
        </g>
        <g fill="#000" fontSize="15" fontFamily="'Noto Sans', sans-serif" textAnchor="middle">
          {NODES.map((n) => (
            <text key={n.id} x={n.x} y={n.y + 61} textLength={n.width} lengthAdjust="spacingAndGlyphs">
              {n.label}
            </text>
          ))}
        </g>
        <rect x="667.5" y="899" width="187.5" height="40" fill="none" stroke="#7fb0e2" strokeWidth="2" strokeDasharray="8 2 3 1.4" />
        <rect x="671.5" y="903.3" width="179.5" height="31.2" rx="1" fill="#fff" stroke="#1c86de" strokeWidth="3.4" />
      </svg>
      {NODES.map((n) => (
        <div
          key={n.id}
          className={`absolute flex size-[60px] items-center justify-center rounded-full ${n.fill}`}
          style={{ left: n.x - 394, top: n.y - 87 }}
        >
          <Icon name={n.icon} className={n.iconClass} />
        </div>
      ))}
    </div>
  );
}

export default function App() {
  return (
    <div className="flex h-[1020px] w-[1918px] flex-col overflow-hidden bg-white font-['Noto_Sans',sans-serif]">
      <TitleBar />
      <MenuBar />
      <div className="flex min-h-0 flex-1">
        <Sidebar />
        <main className="flex min-w-0 flex-1 flex-col">
          <Canvas />
          <div className="flex h-5 shrink-0 items-center bg-[#efefef] pr-[19px] pl-[406px]">
            <div className="h-1.5 w-full bg-[#858585]" />
          </div>
        </main>
      </div>
    </div>
  );
}
